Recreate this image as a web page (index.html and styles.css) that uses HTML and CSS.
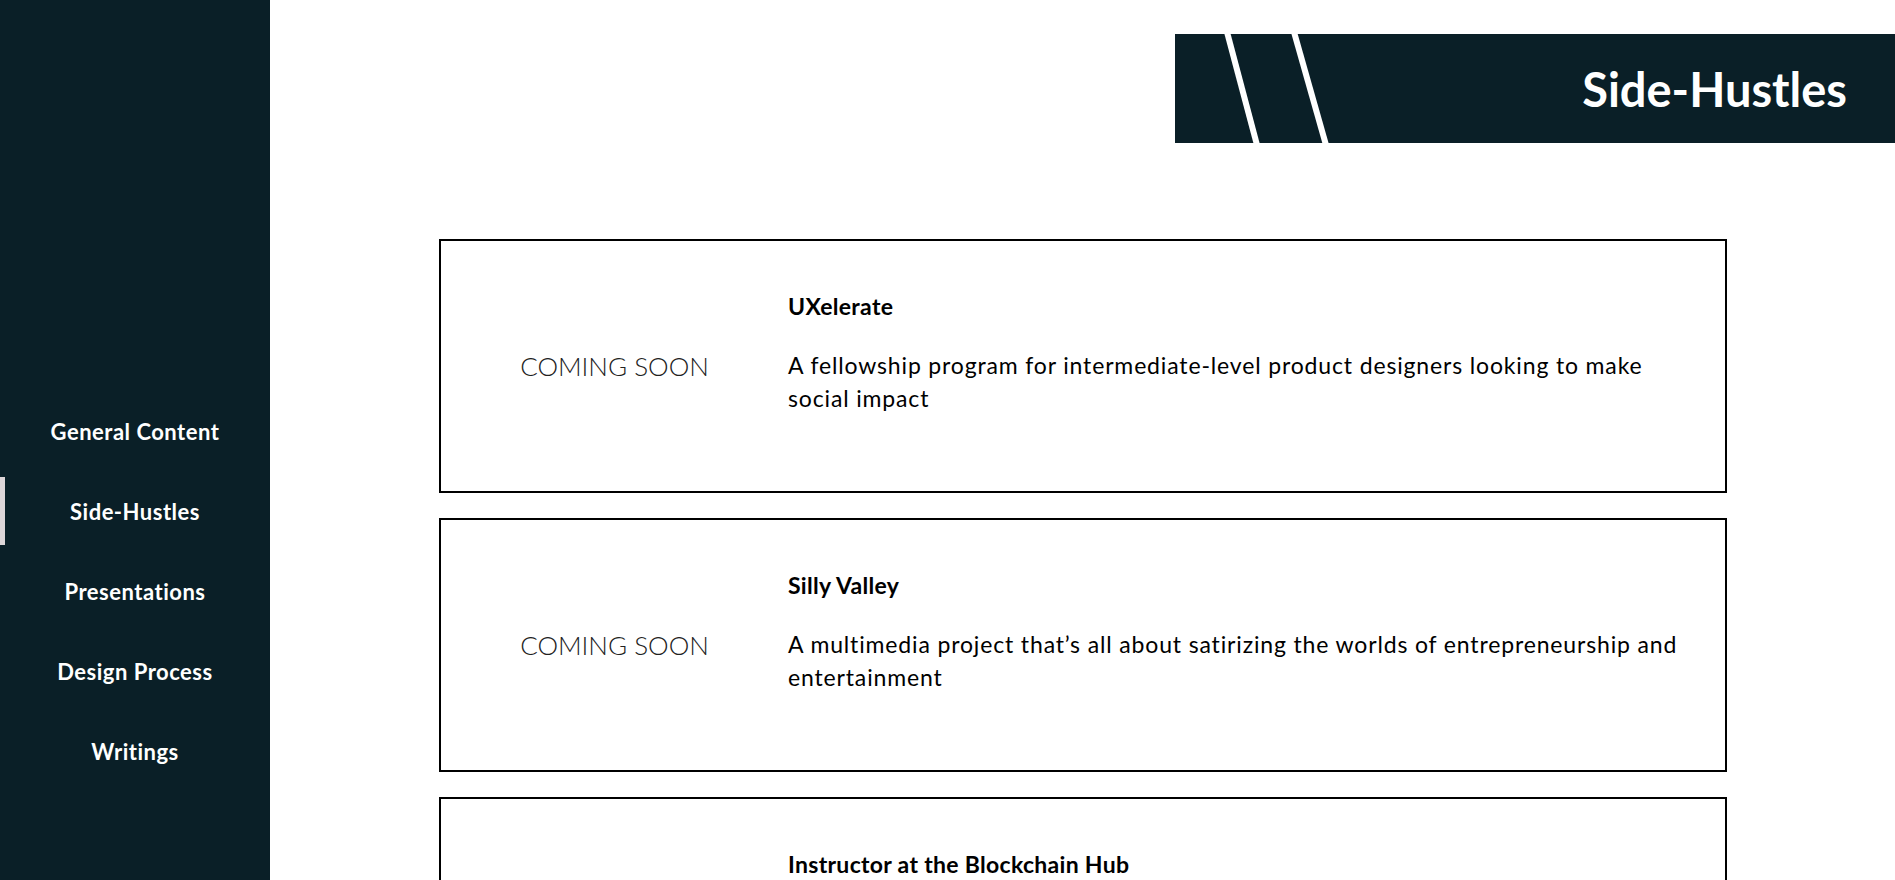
FILE: index.html
```html
<!DOCTYPE html>
<html lang="en">
<head>
<meta charset="utf-8">
<title>Side-Hustles</title>
<link rel="stylesheet" href="styles.css">
</head>
<body>
<aside class="sidebar">
  <nav class="nav">
    <a class="nav-item" href="#">General Content</a>
    <a class="nav-item active" href="#">Side-Hustles</a>
    <a class="nav-item" href="#">Presentations</a>
    <a class="nav-item" href="#">Design Process</a>
    <a class="nav-item" href="#">Writings</a>
  </nav>
</aside>
<main class="main">
  <header class="banner">
    <svg class="banner-lines" width="170" height="109" viewBox="0 0 170 109">
      <line x1="52" y1="-2" x2="82" y2="111" stroke="#fff" stroke-width="6"/>
      <line x1="119" y1="-2" x2="151" y2="111" stroke="#fff" stroke-width="6"/>
    </svg>
    <h1 class="banner-title">Side-Hustles</h1>
  </header>
  <section class="cards">
    <article class="card">
      <div class="card-media">COMING SOON</div>
      <div class="card-body">
        <h2 class="card-title">UXelerate</h2>
        <p class="card-text">A fellowship program for intermediate-level product designers looking to make social impact</p>
      </div>
    </article>
    <article class="card">
      <div class="card-media">COMING SOON</div>
      <div class="card-body">
        <h2 class="card-title">Silly Valley</h2>
        <p class="card-text">A multimedia project that’s all about satirizing the worlds of entrepreneurship and entertainment</p>
      </div>
    </article>
    <article class="card">
      <div class="card-media"></div>
      <div class="card-body">
        <h2 class="card-title">Instructor at the Blockchain Hub</h2>
      </div>
    </article>
  </section>
</main>
</body>
</html>
```
FILE: styles.css
```css
* { box-sizing: border-box; }
html, body { margin: 0; padding: 0; }
body {
  display: flex;
  background: #fff;
  font-family: Lato, "Open Sans", sans-serif;
  color: #000;
  height: 880px;
  overflow: hidden;
}
.sidebar {
  width: 270px;
  flex: 0 0 270px;
  height: 880px;
  background: #0a1f27;
}
.nav {
  display: flex;
  flex-direction: column;
  gap: 12px;
  padding-top: 397px;
}
.nav-item {
  position: relative;
  height: 68px;
  display: flex;
  align-items: center;
  justify-content: center;
  color: #fff;
  text-decoration: none;
  font-size: 22px;
  letter-spacing: 0.5px;
  font-weight: 700;
}
.nav-item.active::before {
  content: "";
  position: absolute;
  left: 0;
  top: 0;
  width: 5px;
  height: 68px;
  background: #ddd6d8;
}
.main {
  flex: 1;
  padding: 34px 168px 0 169px;
}
.banner {
  margin-left: 736px;
  margin-right: -168px;
  height: 109px;
  background: #0a1f27;
  display: flex;
  align-items: center;
  justify-content: space-between;
  padding-right: 48px;
}
.banner-lines { display: block; align-self: stretch; height: 109px; }
.banner-title {
  margin: 0;
  color: #fff;
  font-size: 47px;
  font-weight: 700;
}
.cards {
  margin-top: 96px;
  display: flex;
  flex-direction: column;
  gap: 25px;
}
.card {
  border: 2px solid #000;
  height: 254px;
  flex: 0 0 254px;
  display: flex;
}
.card-media {
  width: 347px;
  flex: 0 0 347px;
  display: flex;
  align-items: center;
  justify-content: center;
  font-size: 26px;
  font-weight: 300;
  color: #222;
}
.card-body {
  flex: 1;
  padding: 50px 40px 0 0;
}
.card-title {
  margin: 0;
  font-size: 23px;
  letter-spacing: 0.3px;
  line-height: 30px;
  font-weight: 700;
}
.card-text {
  margin: 28px 0 0;
  font-size: 23px;
  letter-spacing: 0.85px;
  line-height: 33px;
}
```
